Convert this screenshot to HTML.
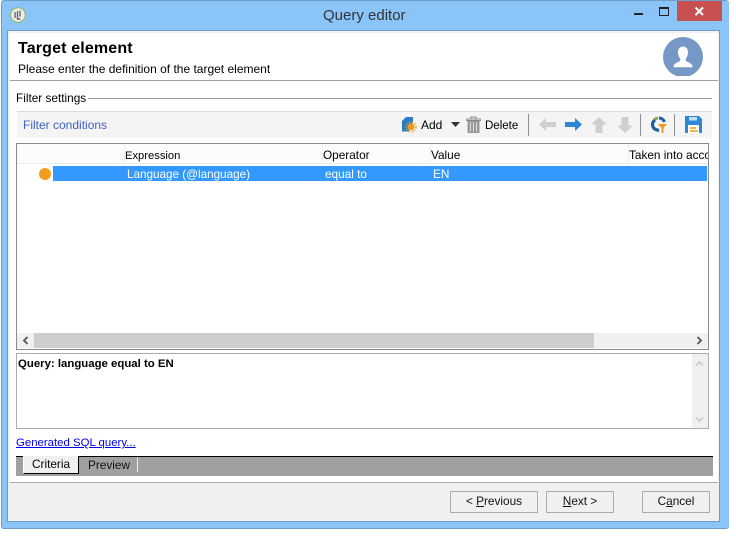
<!DOCTYPE html>
<html><head><meta charset="utf-8">
<style>
html,body{margin:0;padding:0;background:#fff;}
#p{position:relative;width:736px;height:541px;overflow:hidden;background:#fff;font-family:"Liberation Sans",sans-serif;font-size:12px;color:#000;}
#p div,#p span.a,#p svg{position:absolute;}
.t{white-space:nowrap;line-height:14px;}
u{text-decoration:underline;}
.btn{background:#f0f0f0;border:1px solid #acacac;box-sizing:border-box;height:22px;top:491px;text-align:center;line-height:19px;font-size:11.8px;color:#111;}
</style></head><body><div id="p">
<div style="left:1px;top:0;width:728px;height:529px;background:#8ac4f8;border:1px solid #6f9cc4;border-width:1px 0 1px 1px;box-sizing:border-box;border-radius:3px;"></div>
<div style="left:727px;top:1px;width:2px;height:527px;background:#8ac4f8;"></div>
<div style="left:7px;top:30px;width:713px;height:492px;background:#fff;border:1px solid #6f9cc4;box-sizing:border-box;"></div>
<div style="left:8px;top:31px;width:711px;height:2px;background:#f0f0f0;"></div>
<div style="left:8px;top:31px;width:2px;height:452px;background:#f0f0f0;"></div>
<div style="left:718px;top:31px;width:1px;height:452px;background:#f0f0f0;"></div>
<div style="left:8px;top:483px;width:711px;height:38px;background:#f0f0f0;"></div>
<div style="left:10px;top:80px;width:708px;height:1px;background:#a0a0a0;"></div>
<div style="left:10px;top:482px;width:708px;height:1px;background:#acacac;"></div>

<svg style="left:10px;top:7px" width="16" height="16" viewBox="0 0 16 16"><circle cx="8" cy="8" r="7.3" fill="#eee" stroke="#8fb850" stroke-width="1"/><path d="M5 5v6M7.500 4v8h3M10 3.500v6" stroke="#666" stroke-width="1.400" fill="none"/></svg>
<div class="t" style="left:323px;top:8px;font-size:15px;line-height:16px;color:#333;">Query editor</div>
<div style="left:634px;top:13px;width:9px;height:2px;background:#222;"></div>
<div style="left:659px;top:7px;width:8px;height:6px;border:1px solid #222;border-top-width:2px;"></div>
<div style="left:677px;top:1px;width:45px;height:20px;background:#c75050;"></div>
<svg style="left:694px;top:6px" width="11" height="11" viewBox="0 0 11 11"><path d="M1.500 1.500L9 9M9 1.500L1.500 9" stroke="#fff" stroke-width="2"/></svg>

<div class="t" style="left:18px;top:40px;font-size:16px;line-height:18px;font-weight:bold;letter-spacing:.15px;">Target element</div>
<div class="t" style="left:18px;top:62px;font-size:12px;">Please enter the definition of the target element</div>
<svg style="left:663px;top:37px" width="40" height="40" viewBox="0 0 40 40"><defs><clipPath id="c"><rect width="40" height="39"/></clipPath></defs><g clip-path="url(#c)"><circle cx="20" cy="20" r="20" fill="#7598c6"/><path d="M20 9.500c-3.200 0-5 2.500-5 5.700 0 2.800 1 5 2.200 6.500v2.300c-2 1.300-6.200 1.800-6.700 5.500v.8h19v-.8c-.5-3.700-4.700-4.200-6.700-5.500v-2.300c1.200-1.500 2.200-3.700 2.200-6.500 0-3.200-1.800-5.700-5-5.700z" fill="#fff"/></g></svg>

<div class="t" style="left:16px;top:91px;font-size:11.800px;">Filter settings</div>
<div style="left:88px;top:98px;width:624px;height:1px;background:#a0a0a0;"></div>

<div style="left:17px;top:111px;width:695px;height:27px;background:#f4f4f4;border-top:1px solid #dcdcdc;box-sizing:border-box;"></div>
<div class="t" style="left:23px;top:118px;font-size:12px;color:#3f5fc0;">Filter conditions</div>

<svg style="left:401px;top:116px" width="16" height="17" viewBox="0 0 16 17"><path d="M1 5L5 1h7v6.500H8v8H1z" fill="#2a7cc6"/><circle cx="10" cy="11" r="3.500" fill="#f39a1e"/><circle cx="10" cy="11" r="5" fill="none" stroke="#f39a1e" stroke-width="1.200" stroke-dasharray="1.500 1.500"/></svg>
<div class="t" style="left:421px;top:118px;font-size:12px;">Add</div>
<svg style="left:451px;top:122px" width="9" height="5" viewBox="0 0 9 5"><path d="M0 0h9L4.500 5z" fill="#333"/></svg>
<svg style="left:466px;top:116px" width="15" height="17" viewBox="0 0 15 17"><path d="M5 2.500V1h5v1.500M0 3h15v1.500H0z" fill="none" stroke="#8a8a8a" stroke-width="1"/><path d="M1.500 5h12v12h-12z" fill="#9a9a9a"/><path d="M4.500 6.500v9M7.500 6.500v9M10.500 6.500v9" stroke="#dedede" stroke-width="1"/></svg>
<div class="t" style="left:485px;top:119px;font-size:11.500px;">Delete</div>
<div style="left:528px;top:114px;width:1px;height:22px;background:#8f8f8f;"></div>

<svg style="left:539px;top:117px" width="17" height="15" viewBox="0 0 17 15"><path d="M0 7.500L7 1v4h10v5H7v4z" fill="#cfcfcf"/></svg>
<svg style="left:565px;top:117px" width="17" height="15" viewBox="0 0 17 15"><path d="M17 7.500L10 1v4H0v5h10v4z" fill="#2d86d6"/></svg>
<svg style="left:591px;top:117px" width="16" height="16" viewBox="0 0 16 16"><path d="M8 0l8 7.500h-4.500V16h-7V7.500H0z" fill="#cfcfcf"/></svg>
<svg style="left:617px;top:117px" width="16" height="16" viewBox="0 0 16 16"><path d="M8 16L0 8.500h4.500V0h7v8.500H16z" fill="#cfcfcf"/></svg>
<div style="left:640px;top:114px;width:1px;height:22px;background:#8f8f8f;"></div>
<svg style="left:650px;top:116px" width="17" height="17" viewBox="0 0 17 17"><path d="M5 4A5.500 5.500 0 0 0 9 14" fill="none" stroke="#1f5f9e" stroke-width="3.200"/><path d="M4.500 3.500A6 6 0 0 1 8 2" fill="none" stroke="#7ab648" stroke-width="3"/><path d="M9 2a6 6 0 0 1 5.500 4" fill="none" stroke="#1f5f9e" stroke-width="3"/><path d="M8 8h9l-3.500 4v5h-2v-5z" fill="#f39a1e"/></svg>
<div style="left:674px;top:114px;width:1px;height:22px;background:#8f8f8f;"></div>
<svg style="left:685px;top:116px" width="17" height="17" viewBox="0 0 17 17"><path d="M0 0h14l3 3v14H0z" fill="#2d86d6"/><rect x="4" y="1" width="8" height="3.500" fill="#bfe0f8"/><rect x="3" y="9" width="11" height="8" fill="#fff"/><path d="M5 12h6M5 15h8" stroke="#f39a1e" stroke-width="1.500"/></svg>

<div style="left:16px;top:143px;width:693px;height:207px;background:#fff;border:1px solid #8a8a8a;box-sizing:border-box;"></div>
<div style="left:17px;top:144px;width:691px;height:20px;background:#fcfcfc;border-bottom:1px solid #e6effa;box-sizing:border-box;"></div>
<div style="left:124px;top:144px;width:1px;height:20px;background:#e6effa;"></div>
<div style="left:322px;top:144px;width:1px;height:20px;background:#e6effa;"></div>
<div style="left:430px;top:144px;width:1px;height:20px;background:#e6effa;"></div>
<div style="left:628px;top:144px;width:1px;height:20px;background:#e6effa;"></div>
<div class="t" style="left:125px;top:149px;font-size:11.200px;">Expression</div>
<div class="t" style="left:323px;top:148px;font-size:11.800px;">Operator</div>
<div class="t" style="left:431px;top:148px;font-size:11.800px;">Value</div>
<div class="t" style="left:629px;top:148px;width:79px;overflow:hidden;font-size:11.800px;">Taken into account</div>

<div style="left:39px;top:168px;width:12px;height:12px;border-radius:50%;background:#f19e1f;"></div>
<div style="left:53px;top:166px;width:654px;height:15px;background:#3399ff;"></div>
<div class="t" style="left:127px;top:168px;font-size:11.700px;color:#fff;">Language (@language)</div>
<div class="t" style="left:325px;top:167px;font-size:11.800px;color:#fff;">equal to</div>
<div class="t" style="left:433px;top:167px;font-size:11.800px;color:#fff;">EN</div>

<div style="left:17px;top:333px;width:691px;height:15px;background:#f0f0f0;"></div>
<div style="left:34px;top:333px;width:560px;height:15px;background:#cdcdcd;"></div>
<svg style="left:22px;top:336px" width="7" height="9" viewBox="0 0 7 9"><path d="M5.500 1L2 4.500 5.500 8" fill="none" stroke="#555" stroke-width="1.800"/></svg>
<svg style="left:696px;top:336px" width="7" height="9" viewBox="0 0 7 9"><path d="M1.500 1L5 4.500 1.500 8" fill="none" stroke="#555" stroke-width="1.800"/></svg>

<div style="left:16px;top:353px;width:693px;height:76px;background:#fff;border:1px solid #acacac;box-sizing:border-box;"></div>
<div style="left:692px;top:354px;width:16px;height:74px;background:#f0f0f0;"></div>
<svg style="left:695px;top:360px" width="9" height="7" viewBox="0 0 9 7"><path d="M1 5.500L4.500 2 8 5.500" fill="none" stroke="#c8c8c8" stroke-width="1.600"/></svg>
<svg style="left:695px;top:416px" width="9" height="7" viewBox="0 0 9 7"><path d="M1 1.500L4.500 5 8 1.500" fill="none" stroke="#c8c8c8" stroke-width="1.600"/></svg>
<div class="t" style="left:18px;top:357px;font-size:11.400px;font-weight:bold;">Query: language equal to EN</div>

<div class="t" style="left:16px;top:436px;font-size:11.400px;color:#0000ee;text-decoration:underline;">Generated SQL query...</div>

<div style="left:16px;top:456px;width:697px;height:20px;background:#a0a0a0;border-top:1px solid #000;box-sizing:border-box;"></div>
<div style="left:23px;top:456px;width:56px;height:18px;background:#f0f0f0;border-left:1px solid #fff;border-right:1px solid #000;border-bottom:1px solid #000;box-sizing:border-box;"></div>
<div class="t" style="left:32px;top:457px;font-size:11.800px;">Criteria</div>
<div class="t" style="left:88px;top:458px;font-size:11.800px;color:#111;">Preview</div>
<div style="left:137px;top:458px;width:1px;height:14px;background:#f0f0f0;"></div>

<div class="btn" style="left:450px;width:88px;">&lt; <u>P</u>revious</div>
<div class="btn" style="left:546px;width:68px;"><u>N</u>ext &gt;</div>
<div class="btn" style="left:642px;width:68px;">C<u>a</u>ncel</div>
</div></body></html>
